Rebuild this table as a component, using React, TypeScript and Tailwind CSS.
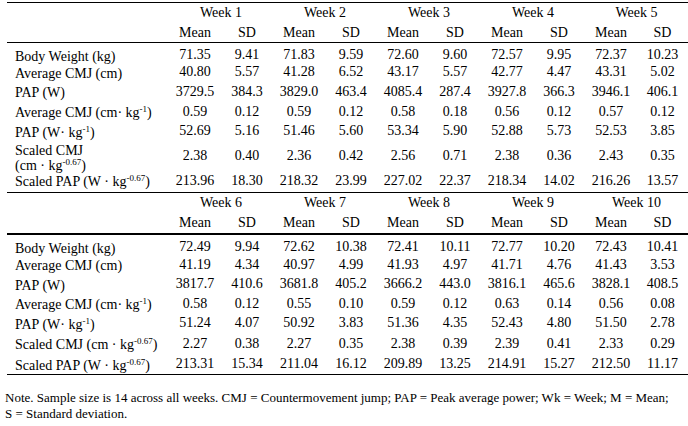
import React from "react";

type Row = { label: React.ReactNode; vals: string[]; h: string; pt?: string; border?: string };

const Sup = ({ children }: { children: React.ReactNode }) => (
  <span className="text-[9px] align-[5px] leading-none">{children}</span>
);

const GRID = "grid grid-cols-[162px_repeat(9,52px)_51px]";

function Table({
  weeks,
  rows,
  headerLine,
  topBorder,
}: {
  weeks: number[];
  rows: Row[];
  headerLine: string;
  topBorder: boolean;
}) {
  return (
    <div className={topBorder ? "border-t border-black" : ""}>
      <div className={`${GRID} h-[20px] items-center`}>
        <div />
        {weeks.map((w) => (
          <div key={w} className="col-span-2 text-center">Week {w}</div>
        ))}
      </div>
      <div className={`${GRID} items-center ${headerLine}`}>
        <div />
        {weeks.map((w) => (
          <React.Fragment key={w}>
            <div className="text-center">Mean</div>
            <div className="text-center">SD</div>
          </React.Fragment>
        ))}
      </div>
      {rows.map((r, i) => (
        <div key={i} className={`${GRID} items-center ${r.h} ${r.pt ?? ""} ${r.border ?? ""}`}>
          <div className="pl-[8px] leading-[15px] translate-y-[1px]">{r.label}</div>
          {r.vals.map((v, j) => (
            <div key={j} className="text-center">{v}</div>
          ))}
        </div>
      ))}
    </div>
  );
}

export default function App() {
  const rows1: Row[] = [
    { label: "Body Weight (kg)", vals: ["71.35", "9.41", "71.83", "9.59", "72.60", "9.60", "72.57", "9.95", "72.37", "10.23"], h: "h-[20px]", pt: "pt-[4px]" },
    { label: "Average CMJ (cm)", vals: ["40.80", "5.57", "41.28", "6.52", "43.17", "5.57", "42.77", "4.47", "43.31", "5.02"], h: "h-[18px]" },
    { label: "PAP (W)", vals: ["3729.5", "384.3", "3829.0", "463.4", "4085.4", "287.4", "3927.8", "366.3", "3946.1", "406.1"], h: "h-[21px]" },
    { label: <>Average CMJ (cm· kg<Sup>-1</Sup>)</>, vals: ["0.59", "0.12", "0.59", "0.12", "0.58", "0.18", "0.56", "0.12", "0.57", "0.12"], h: "h-[19px]" },
    { label: <>PAP (W· kg<Sup>-1</Sup>)</>, vals: ["52.69", "5.16", "51.46", "5.60", "53.34", "5.90", "52.88", "5.73", "52.53", "3.85"], h: "h-[20px]" },
    { label: <span className="block translate-y-[1px]">Scaled CMJ<br />(cm · kg<Sup>-0.67</Sup>)</span>, vals: ["2.38", "0.40", "2.36", "0.42", "2.56", "0.71", "2.38", "0.36", "2.43", "0.35"], h: "h-[28px]" },
    { label: <>Scaled PAP (W · kg<Sup>-0.67</Sup>)</>, vals: ["213.96", "18.30", "218.32", "23.99", "227.02", "22.37", "218.34", "14.02", "216.26", "13.57"], h: "h-[24px]", border: "border-b border-black" },
  ];
  const rows2: Row[] = [
    { label: "Body Weight (kg)", vals: ["72.49", "9.94", "72.62", "10.38", "72.41", "10.11", "72.77", "10.20", "72.43", "10.41"], h: "h-[20px]", pt: "pt-[4px]" },
    { label: "Average CMJ (cm)", vals: ["41.19", "4.34", "40.97", "4.99", "41.93", "4.97", "41.71", "4.76", "41.43", "3.53"], h: "h-[19px]" },
    { label: "PAP (W)", vals: ["3817.7", "410.6", "3681.8", "405.2", "3666.2", "443.0", "3816.1", "465.6", "3828.1", "408.5"], h: "h-[20px]" },
    { label: <>Average CMJ (cm· kg<Sup>-1</Sup>)</>, vals: ["0.58", "0.12", "0.55", "0.10", "0.59", "0.12", "0.63", "0.14", "0.56", "0.08"], h: "h-[19px]" },
    { label: <>PAP (W· kg<Sup>-1</Sup>)</>, vals: ["51.24", "4.07", "50.92", "3.83", "51.36", "4.35", "52.43", "4.80", "51.50", "2.78"], h: "h-[20px]" },
    { label: <>Scaled CMJ (cm · kg<Sup>-0.67</Sup>)</>, vals: ["2.27", "0.38", "2.27", "0.35", "2.38", "0.39", "2.39", "0.41", "2.33", "0.29"], h: "h-[21px]" },
    { label: <>Scaled PAP (W · kg<Sup>-0.67</Sup>)</>, vals: ["213.31", "15.34", "211.04", "16.12", "209.89", "13.25", "214.91", "15.27", "212.50", "11.17"], h: "h-[21px]", border: "border-b border-black" },
  ];
  return (
    <div className="w-[688px] h-[426px] bg-white text-black font-['Liberation_Serif',serif] text-[14px] leading-[16px] overflow-hidden">
      <div className="ml-[7px] pt-[2px]">
        <Table weeks={[1, 2, 3, 4, 5]} rows={rows1} headerLine="h-[20px] border-b border-black" topBorder={true} />
        <Table weeks={[6, 7, 8, 9, 10]} rows={rows2} headerLine="h-[22px] border-b-2 border-black" topBorder={false} />
      </div>
      <div className="pl-[5px] mt-[15px] text-[13px] leading-[16px]">
        <p>Note. Sample size is 14 across all weeks. CMJ = Countermovement jump; PAP = Peak average power; Wk = Week; M = Mean;</p>
        <p>S = Standard deviation.</p>
      </div>
    </div>
  );
}
